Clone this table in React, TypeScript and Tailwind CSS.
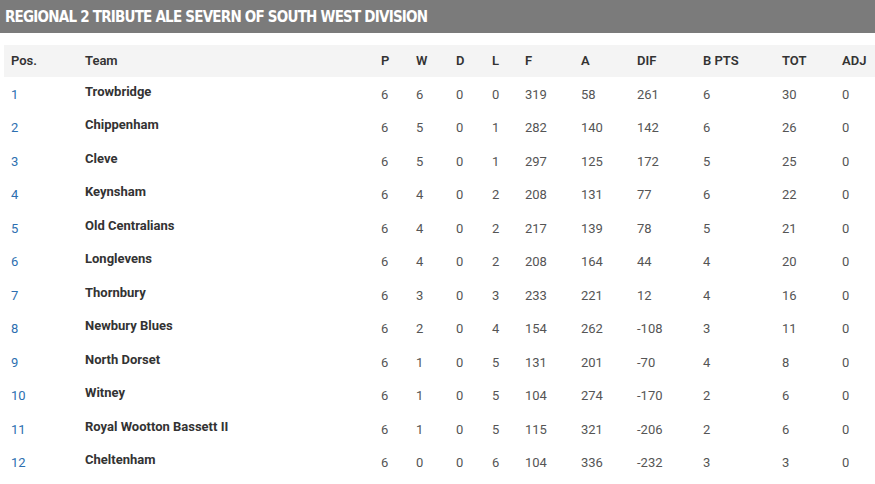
const rows = [
  [1, "Trowbridge", 6, 6, 0, 0, 319, 58, 261, 6, 30, 0],
  [2, "Chippenham", 6, 5, 0, 1, 282, 140, 142, 6, 26, 0],
  [3, "Cleve", 6, 5, 0, 1, 297, 125, 172, 5, 25, 0],
  [4, "Keynsham", 6, 4, 0, 2, 208, 131, 77, 6, 22, 0],
  [5, "Old Centralians", 6, 4, 0, 2, 217, 139, 78, 5, 21, 0],
  [6, "Longlevens", 6, 4, 0, 2, 208, 164, 44, 4, 20, 0],
  [7, "Thornbury", 6, 3, 0, 3, 233, 221, 12, 4, 16, 0],
  [8, "Newbury Blues", 6, 2, 0, 4, 154, 262, -108, 3, 11, 0],
  [9, "North Dorset", 6, 1, 0, 5, 131, 201, -70, 4, 8, 0],
  [10, "Witney", 6, 1, 0, 5, 104, 274, -170, 2, 6, 0],
  [11, "Royal Wootton Bassett II", 6, 1, 0, 5, 115, 321, -206, 2, 6, 0],
  [12, "Cheltenham", 6, 0, 0, 6, 104, 336, -232, 3, 3, 0],
];

const heads = ["P", "W", "D", "L", "F", "A", "DIF", "B PTS", "TOT", "ADJ"];

export default function App() {
  return (
    <div className="w-[875px] h-[484px] overflow-hidden bg-white font-['Roboto',sans-serif]">
      <div className="h-[33px] bg-[#7b7b7b] flex items-center pl-[5px] pt-[1px]">
        <h2 className="text-white font-bold text-[15px] tracking-[-0.78px] [font-stretch:condensed] font-['DejaVu_Sans',sans-serif] leading-none">
          REGIONAL 2 TRIBUTE ALE SEVERN OF SOUTH WEST DIVISION
        </h2>
      </div>
      <div className="pl-[4px] pt-[12px]">
        <table className="w-[871px] table-fixed border-collapse text-[13px]">
          <colgroup>
            <col className="w-[74px]" />
            <col className="w-[296px]" />
            <col className="w-[35px]" />
            <col className="w-[40px]" />
            <col className="w-[36px]" />
            <col className="w-[33px]" />
            <col className="w-[56px]" />
            <col className="w-[56px]" />
            <col className="w-[66px]" />
            <col className="w-[79px]" />
            <col className="w-[60px]" />
            <col className="w-[40px]" />
          </colgroup>
          <thead>
            <tr className="bg-[#f4f4f4] h-[32px] text-[#333] text-left">
              <th className="pl-[7px] font-semibold">Pos.</th>
              <th className="pl-[7px] font-semibold">Team</th>
              {heads.map((h) => (
                <th key={h} className="pl-[7px] font-semibold">{h}</th>
              ))}
            </tr>
          </thead>
          <tbody>
            {rows.map((r) => (
              <tr key={r[0]} className="h-[33.5px] text-[#555]">
                <td className="pl-[7px] pt-[1px] text-[#2d6fb0]">{r[0]}</td>
                <td className="pl-[7px] pb-[5px] font-bold text-[#333]">{r[1]}</td>
                {r.slice(2).map((v, i) => (
                  <td key={i} className="pl-[7px] pt-[1px]">{v}</td>
                ))}
              </tr>
            ))}
          </tbody>
        </table>
      </div>
    </div>
  );
}
